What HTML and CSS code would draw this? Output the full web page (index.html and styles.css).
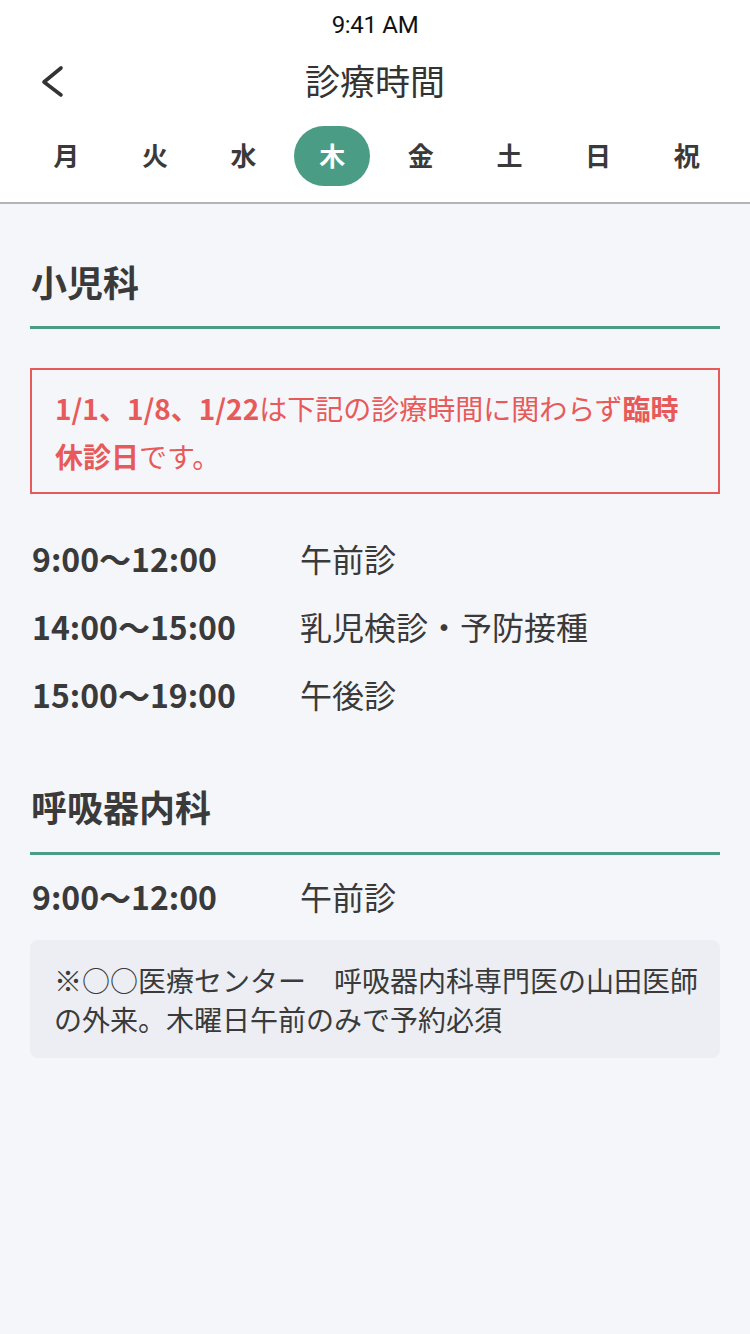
FILE: index.html
```html
<!DOCTYPE html>
<html lang="ja">
<head>
    <meta charset="UTF-8">
    <meta name="viewport" content="width=device-width, initial-scale=1.0">
    <title>診療時間</title>
    <link rel="stylesheet" href="styles.css">
</head>
<body>
    <header class="top">
        <div class="status">9:41 AM</div>
        <div class="nav">
            <a class="back" href="#">
                <svg width="24" height="34" viewBox="0 0 24 34"><path d="M20 3 L3 17 L20 30" fill="none" stroke="#333" stroke-width="3.6" stroke-linecap="round" stroke-linejoin="round"/></svg>
            </a>
            <h1 class="title">診療時間</h1>
        </div>
        <nav class="days">
            <span class="day">月</span>
            <span class="day">火</span>
            <span class="day">水</span>
            <span class="day active">木</span>
            <span class="day">金</span>
            <span class="day">土</span>
            <span class="day">日</span>
            <span class="day">祝</span>
        </nav>
    </header>

    <main class="content">
        <section class="dept">
            <h2 class="dept-name">小児科</h2>
            <div class="alert">
                <b>1/1、1/8、1/22</b>は下記の診療時間に関わらず<b>臨時休診日</b>です。
            </div>
            <ul class="hours">
                <li><span class="time">9:00〜12:00</span><span class="label">午前診</span></li>
                <li><span class="time">14:00〜15:00</span><span class="label">乳児検診・予防接種</span></li>
                <li><span class="time">15:00〜19:00</span><span class="label">午後診</span></li>
            </ul>
        </section>

        <section class="dept second">
            <h2 class="dept-name">呼吸器内科</h2>
            <ul class="hours tight">
                <li><span class="time">9:00〜12:00</span><span class="label">午前診</span></li>
            </ul>
            <p class="note">※○○医療センター　呼吸器内科専門医の山田医師の外来。木曜日午前のみで予約必須</p>
        </section>
    </main>
</body>
</html>
```

FILE: styles.css
```css
* {
    box-sizing: border-box;
}

body {
    margin: 0;
    background: #f5f6fa;
    color: #3a3a3a;
    font-family: "Noto Sans CJK JP", "Noto Sans", sans-serif;
}

.top {
    background: #fff;
    border-bottom: 2px solid #b4b4b4;
}

.status {
    height: 48px;
    line-height: 50px;
    text-align: center;
    font-family: Roboto, "Noto Sans", sans-serif;
    font-size: 24px;
    letter-spacing: -0.3px;
    color: #111;
}

.nav {
    position: relative;
    height: 70px;
    display: flex;
    align-items: center;
    justify-content: center;
    padding-bottom: 6px;
}

.back {
    position: absolute;
    left: 41px;
    top: 17px;
    display: block;
    line-height: 0;
}

.title {
    margin: 0;
    font-size: 35px;
    line-height: 50px;
    font-weight: 400;
    color: #333;
}

.days {
    display: grid;
    grid-template-columns: repeat(8, 1fr);
    padding: 8px 19px 16px 22px;
}

.day {
    justify-self: center;
    width: 76px;
    height: 60px;
    line-height: 58px;
    text-align: center;
    font-size: 26px;
    font-weight: 700;
    color: #3a3a3a;
    border-radius: 30px;
}

.day.active {
    background: #4a9c84;
    color: #fff;
}

.content {
    padding: 52px 30px 0;
}

.dept-name {
    margin: 0;
    padding: 0 1px 20px;
    font-size: 36px;
    line-height: 50px;
    font-weight: 700;
    color: #3a3a3a;
    border-bottom: 3px solid #4a9c84;
}

.second .dept-name {
    margin-top: 53px;
    padding-bottom: 21px;
}

.alert {
    margin-top: 39px;
    border: 2px solid #e85a5a;
    padding: 14px 24px 12px 23px;
    font-size: 28px;
    line-height: 48px;
    color: #e85a5a;
}

.hours {
    list-style: none;
    margin: 30px 0 0;
    padding: 0;
}

.hours.tight {
    margin-top: 7px;
}

.hours li {
    display: flex;
    height: 68px;
    align-items: center;
    font-size: 32px;
}

.time {
    width: 270px;
    padding-left: 2px;
    font-weight: 700;
}

.note {
    margin: 10px 0 0;
    padding: 21px 20px 19px 24px;
    background: #eceef3;
    border-radius: 8px;
    font-size: 28px;
    line-height: 39px;
    color: #3a3a3a;
}
```
